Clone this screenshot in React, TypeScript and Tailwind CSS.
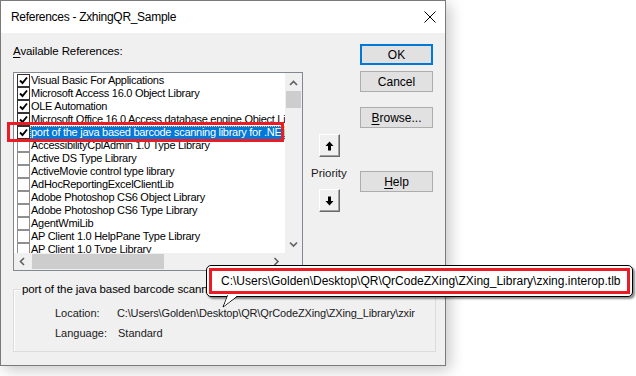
const items = [
  { label: 'Visual Basic For Applications', checked: true },
  { label: 'Microsoft Access 16.0 Object Library', checked: true },
  { label: 'OLE Automation', checked: true },
  { label: 'Microsoft Office 16.0 Access database engine Object Library', checked: true },
  { label: 'port of the java based barcode scanning library for .NET', checked: true, selected: true },
  { label: 'AccessibilityCplAdmin 1.0 Type Library', checked: false },
  { label: 'Active DS Type Library', checked: false },
  { label: 'ActiveMovie control type library', checked: false },
  { label: 'AdHocReportingExcelClientLib', checked: false },
  { label: 'Adobe Photoshop CS6 Object Library', checked: false },
  { label: 'Adobe Photoshop CS6 Type Library', checked: false },
  { label: 'AgentWmiLib', checked: false },
  { label: 'AP Client 1.0 HelpPane Type Library', checked: false },
  { label: 'AP Client 1.0 Type Library', checked: false },
];

function CheckBox({ checked }: { checked: boolean }) {
  return (
    <div className={`w-[13px] h-[13px] shrink-0 border bg-white flex items-center justify-center ${checked ? 'border-[#333333]' : 'border-[#8f8f8f]'}`}>
      {checked && (
        <svg width="9" height="9" viewBox="0 0 9 9">
          <path d="M1 4.5 L3.5 7 L8 1.5" fill="none" stroke="#000" strokeWidth="1.9" />
        </svg>
      )}
    </div>
  );
}

function Chevron({ dir }: { dir: 'up' | 'down' | 'left' | 'right' }) {
  const d = {
    up: 'M1 6 L4.5 2.5 L8 6',
    down: 'M1 2.5 L4.5 6 L8 2.5',
    left: 'M6 1 L2.5 4.5 L6 8',
    right: 'M2.5 1 L6 4.5 L2.5 8',
  }[dir];
  return (
    <svg width="9" height="9" viewBox="0 0 9 9">
      <path d={d} fill="none" stroke="#606060" strokeWidth="1.6" />
    </svg>
  );
}

function Button({ children, focused }: { children: React.ReactNode; focused?: boolean }) {
  return (
    <div
      className={`w-[73px] h-[21px] flex items-center justify-center bg-[#e1e1e1] text-[12px] text-black ${
        focused ? 'border-2 border-[#0078d7]' : 'border border-[#adadad]'
      }`}
    >
      {children}
    </div>
  );
}

function ArrowButton({ up }: { up?: boolean }) {
  return (
    <div className="w-[21px] h-[23px] bg-[#f0f0f0] border-t border-l border-white border-r border-b border-r-[#696969] border-b-[#696969] shadow-[inset_-1px_-1px_0_#a0a0a0] flex items-center justify-center">
      <svg width="9" height="10" viewBox="0 0 9 10">
        {up ? (
          <path d="M4.5 0.5 L8.5 5 L6 5 L6 9.5 L3 9.5 L3 5 L0.5 5 Z" fill="#000" />
        ) : (
          <path d="M4.5 9.5 L8.5 5 L6 5 L6 0.5 L3 0.5 L3 5 L0.5 5 Z" fill="#000" />
        )}
      </svg>
    </div>
  );
}

export default function App() {
  return (
    <div className="relative w-[636px] h-[376px] bg-white overflow-hidden" style={{ fontFamily: '"Liberation Sans", Arial, sans-serif' }}>
      {/* dialog window */}
      <div className="w-[446px] h-[366px] border border-[#7a7a7a] bg-[#f0f0f0] shadow-[4px_4px_14px_rgba(0,0,0,0.22)] flex flex-col">
        <div className="h-[32px] bg-white flex items-center justify-between pl-[10px] pr-[8px] shrink-0">
          <span className="text-[12px] text-black tracking-[-0.3px]">References - ZxhingQR_Sample</span>
          <svg width="12" height="12" viewBox="0 0 12 12" className="mr-[1px]">
            <path d="M0.5 0.5 L11.5 11.5 M11.5 0.5 L0.5 11.5" stroke="#000" strokeWidth="1" />
          </svg>
        </div>

        <div className="flex">
          {/* left: list */}
          <div className="ml-[12px] w-[290px] flex flex-col">
            <div className="pt-[11px] h-[39px] text-[11.5px] text-black leading-[14px] tracking-[-0.1px]">
              <span className="underline underline-offset-2">A</span>vailable References:
            </div>
            <div className="h-[199px] border border-[#828790] bg-white flex flex-col">
              <div className="flex h-[180px]">
                <div className="flex-1 overflow-hidden pt-[1px]">
                  {items.map((it) => (
                    <div key={it.label} className="h-[13px] flex items-center pl-[3px] text-[11px] leading-[13px] text-black whitespace-nowrap tracking-[-0.28px]">
                      <CheckBox checked={it.checked} />
                      {it.selected ? (
                        <span className="flex-1 min-w-0 overflow-hidden h-[14px] bg-[#0078d7] text-white outline-1 outline-dotted outline-[#f4c66a] -outline-offset-1 pl-[1px]">
                          {it.label}
                        </span>
                      ) : (
                        <span className="ml-[1px]">{it.label}</span>
                      )}
                    </div>
                  ))}
                </div>
                <div className="w-[17px] bg-[#f0f0f0] flex flex-col items-center">
                  <div className="h-[18px] flex items-center justify-center pt-[2px]">
                    <Chevron dir="up" />
                  </div>
                  <div className="w-[15px] h-[17px] bg-[#cdcdcd]" />
                  <div className="flex-1" />
                  <div className="h-[17px] flex items-center justify-center">
                    <Chevron dir="down" />
                  </div>
                </div>
              </div>
              <div className="flex h-[17px]">
                <div className="flex-1 bg-[#f0f0f0] flex items-center">
                  <div className="w-[17px] flex justify-center">
                    <Chevron dir="left" />
                  </div>
                  <div className="w-[132px] h-[15px] bg-[#cdcdcd] ml-[1px]" />
                  <div className="flex-1" />
                  <div className="w-[17px] flex justify-center">
                    <Chevron dir="right" />
                  </div>
                </div>
                <div className="w-[17px] bg-[#f0f0f0]" />
              </div>
            </div>
          </div>

          {/* middle: priority */}
          <div className="w-[57px] flex flex-col items-start pl-[16px] pt-[101px]">
            <ArrowButton up />
            <div className="text-[11.5px] text-[#1a1a1a] leading-[14px] mt-[9px] -ml-[8px]">Priority</div>
            <div className="mt-[9px]">
              <ArrowButton />
            </div>
          </div>

          {/* right: buttons */}
          <div className="flex flex-col pt-[11px]">
            <Button focused>OK</Button>
            <div className="mt-[6px]">
              <Button>Cancel</Button>
            </div>
            <div className="mt-[15px]">
              <Button>
                <span className="underline underline-offset-2">B</span>rowse...
              </Button>
            </div>
            <div className="mt-[43px]">
              <Button>
                <span className="underline underline-offset-2">H</span>elp
              </Button>
            </div>
          </div>
        </div>

        {/* description group */}
        <div className="relative ml-[12px] mt-[18px] w-[423px] h-[63px] border border-[#dcdcdc] shadow-[inset_1px_1px_0_#fff]">
          <div className="absolute left-[7px] -top-[8px] px-[1px] bg-[#f0f0f0] text-[11.5px] leading-[14px] text-black whitespace-nowrap tracking-[-0.1px]">
            port of the java based barcode scanning library for .NET
          </div>
          <div className="pl-[41px] pt-[16px] text-[11px] leading-[14px] text-[#1a1a1a] flex flex-col gap-[6px]">
            <div className="flex">
              <span className="w-[62px] shrink-0">Location:</span>
              <span className="whitespace-nowrap tracking-[-0.15px]">C:\Users\Golden\Desktop\QR\QrCodeZXing\ZXing_Library\zxir</span>
            </div>
            <div className="flex">
              <span className="w-[63px] shrink-0">Language:</span>
              <span>Standard</span>
            </div>
          </div>
        </div>
      </div>

      {/* red annotation around selected item */}
      <div className="absolute left-[7px] top-[122px] w-[277px] h-[20px] border-[3px] border-[#ec1c24]" />

      {/* tooltip balloon */}
      <div className="absolute left-[206px] top-[265px] w-[427px] h-[32px] bg-white border border-black rounded-[5px] shadow-[2px_2px_2px_rgba(0,0,0,0.45)] p-[2px]">
        <div className="h-full border-[3px] border-[#ec1c24] flex items-center pl-[9px] text-[12px] text-black whitespace-nowrap">
          C:\Users\Golden\Desktop\QR\QrCodeZXing\ZXing_Library\zxing.interop.tlb
        </div>
      </div>
      <svg className="absolute left-[220px] top-[295px]" width="20" height="14" viewBox="0 0 20 14">
        <path d="M8 0 L3 12 L17 1.5" fill="#fff" stroke="#000" strokeWidth="1" />
        <path d="M8.5 -1 L16 -1 L16 1.5 L4 11 Z" fill="#fff" />
      </svg>
    </div>
  );
}
